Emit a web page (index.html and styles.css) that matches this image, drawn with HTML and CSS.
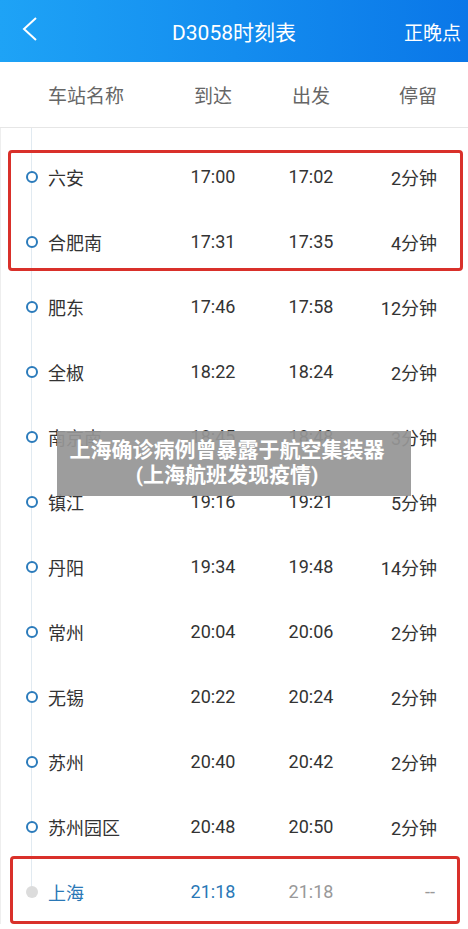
FILE: index.html
```html
<!DOCTYPE html>
<html lang="zh-CN">
<head>
  <meta charset="UTF-8">
  <meta name="viewport" content="width=device-width, initial-scale=1.0">
  <title>D3058时刻表</title>
  <link rel="stylesheet" href="styles.css">
</head>
<body>
  <header class="topbar">
    <div class="back">
      <svg width="16" height="24" viewBox="0 0 16 24"><polyline points="14,1 2,12 14,23" fill="none" stroke="#fff" stroke-width="2"/></svg>
    </div>
    <h1>D3058时刻表</h1>
    <div class="action">正晚点</div>
  </header>

  <div class="table-head">
    <span class="col-name">车站名称</span>
    <span class="col-time">到达</span>
    <span class="col-time">出发</span>
    <span class="col-stay">停留</span>
  </div>

  <main class="stops">
    <!-- rows rendered below -->
    <div class="row"><span class="node"><i class="dot"></i></span><span class="col-name">六安</span><span class="col-time">17:00</span><span class="col-time">17:02</span><span class="col-stay">2分钟</span></div>
    <div class="row"><span class="node"><i class="dot"></i></span><span class="col-name">合肥南</span><span class="col-time">17:31</span><span class="col-time">17:35</span><span class="col-stay">4分钟</span></div>
    <div class="row"><span class="node"><i class="dot"></i></span><span class="col-name">肥东</span><span class="col-time">17:46</span><span class="col-time">17:58</span><span class="col-stay">12分钟</span></div>
    <div class="row"><span class="node"><i class="dot"></i></span><span class="col-name">全椒</span><span class="col-time">18:22</span><span class="col-time">18:24</span><span class="col-stay">2分钟</span></div>
    <div class="row"><span class="node"><i class="dot"></i></span><span class="col-name">南京南</span><span class="col-time">18:45</span><span class="col-time">18:48</span><span class="col-stay">3分钟</span></div>
    <div class="row"><span class="node"><i class="dot"></i></span><span class="col-name">镇江</span><span class="col-time">19:16</span><span class="col-time">19:21</span><span class="col-stay">5分钟</span></div>
    <div class="row"><span class="node"><i class="dot"></i></span><span class="col-name">丹阳</span><span class="col-time">19:34</span><span class="col-time">19:48</span><span class="col-stay">14分钟</span></div>
    <div class="row"><span class="node"><i class="dot"></i></span><span class="col-name">常州</span><span class="col-time">20:04</span><span class="col-time">20:06</span><span class="col-stay">2分钟</span></div>
    <div class="row"><span class="node"><i class="dot"></i></span><span class="col-name">无锡</span><span class="col-time">20:22</span><span class="col-time">20:24</span><span class="col-stay">2分钟</span></div>
    <div class="row"><span class="node"><i class="dot"></i></span><span class="col-name">苏州</span><span class="col-time">20:40</span><span class="col-time">20:42</span><span class="col-stay">2分钟</span></div>
    <div class="row"><span class="node"><i class="dot"></i></span><span class="col-name">苏州园区</span><span class="col-time">20:48</span><span class="col-time">20:50</span><span class="col-stay">2分钟</span></div>
    <div class="row last"><span class="node"><i class="dot"></i></span><span class="col-name">上海</span><span class="col-time arrive">21:18</span><span class="col-time">21:18</span><span class="col-stay">--</span></div>

    <!-- annotations -->
    <div class="mark mark-top"></div>
    <div class="mark mark-bottom"></div>
    <div class="caption">上海确诊病例曾暴露于航空集装器<br>(上海航班发现疫情)</div>
  </main>
</body>
</html>
```

FILE: styles.css
```css
body {
  margin: 0;
  padding: 0;
  background: #fff;
  color: #333;
  font-family: Roboto, "Noto Sans CJK SC", sans-serif;
  width: 468px;
  overflow: hidden;
}

.topbar {
  height: 62px;
  display: flex;
  align-items: center;
  justify-content: space-between;
  background: linear-gradient(90deg, #1ea3f6, #0a77e8);
  color: #fff;
  padding: 0 7px 0 22px;
  box-sizing: border-box;
  position: relative;
}

.back {
  width: 16px;
  height: 24px;
  margin-top: -4px;
}

.topbar h1 {
  margin: 0;
  font-size: 21px;
  font-weight: normal;
  position: absolute;
  left: 0;
  right: 0;
  text-align: center;
  pointer-events: none;
}

.action {
  font-size: 19px;
  position: relative;
}

.table-head,
.row {
  display: grid;
  grid-template-columns: 48px 117px 96px 100px 76px;
  align-items: center;
}

.table-head {
  height: 65px;
  border-bottom: 1px solid #e6e6e6;
  color: #666;
  font-size: 19px;
}

.table-head .col-name {
  grid-column: 2;
}

.col-time {
  text-align: center;
}

.col-stay {
  text-align: right;
}

.stops {
  position: relative;
  padding-top: 16px;
  border-left: 1px solid #eee;
  background: linear-gradient(#e1eaf1, #e1eaf1) no-repeat 30px 0 / 1px 16px;
}

.row {
  height: 65px;
  font-size: 18px;
  margin-left: -1px;
}

.node {
  align-self: stretch;
  display: flex;
  align-items: center;
  background: linear-gradient(#e1eaf1, #e1eaf1) no-repeat 31px 0 / 1px 100%;
}

.dot {
  display: block;
  width: 8px;
  height: 8px;
  margin-left: 26px;
  border: 2px solid #2b7bbb;
  border-radius: 50%;
  background: #fff;
}

.last .node {
  background-size: 1px 50%;
}

.last .dot {
  width: 12px;
  height: 12px;
  border: none;
  background: #dcdcdc;
}

.last .col-name,
.last .arrive {
  color: #2a78b6;
}

.last .col-time {
  color: #999;
}

.last .arrive {
  color: #2a78b6;
}

.last .col-stay {
  color: #999;
  padding-right: 2px;
}

.mark {
  position: absolute;
  border: 3px solid #d9302a;
  border-radius: 4px;
  box-sizing: border-box;
}

.mark-top {
  left: 7px;
  top: 22px;
  width: 455px;
  height: 121px;
}

.mark-bottom {
  left: 9px;
  top: 728px;
  width: 450px;
  height: 68px;
}

.caption {
  position: absolute;
  left: 56px;
  top: 303px;
  width: 354px;
  height: 65px;
  box-sizing: border-box;
  padding: 7px 14px 0 0;
  background: rgba(150, 150, 150, 0.93);
  color: #fff;
  font-size: 21px;
  font-weight: bold;
  line-height: 25px;
  text-align: center;
  white-space: nowrap;
}
```
